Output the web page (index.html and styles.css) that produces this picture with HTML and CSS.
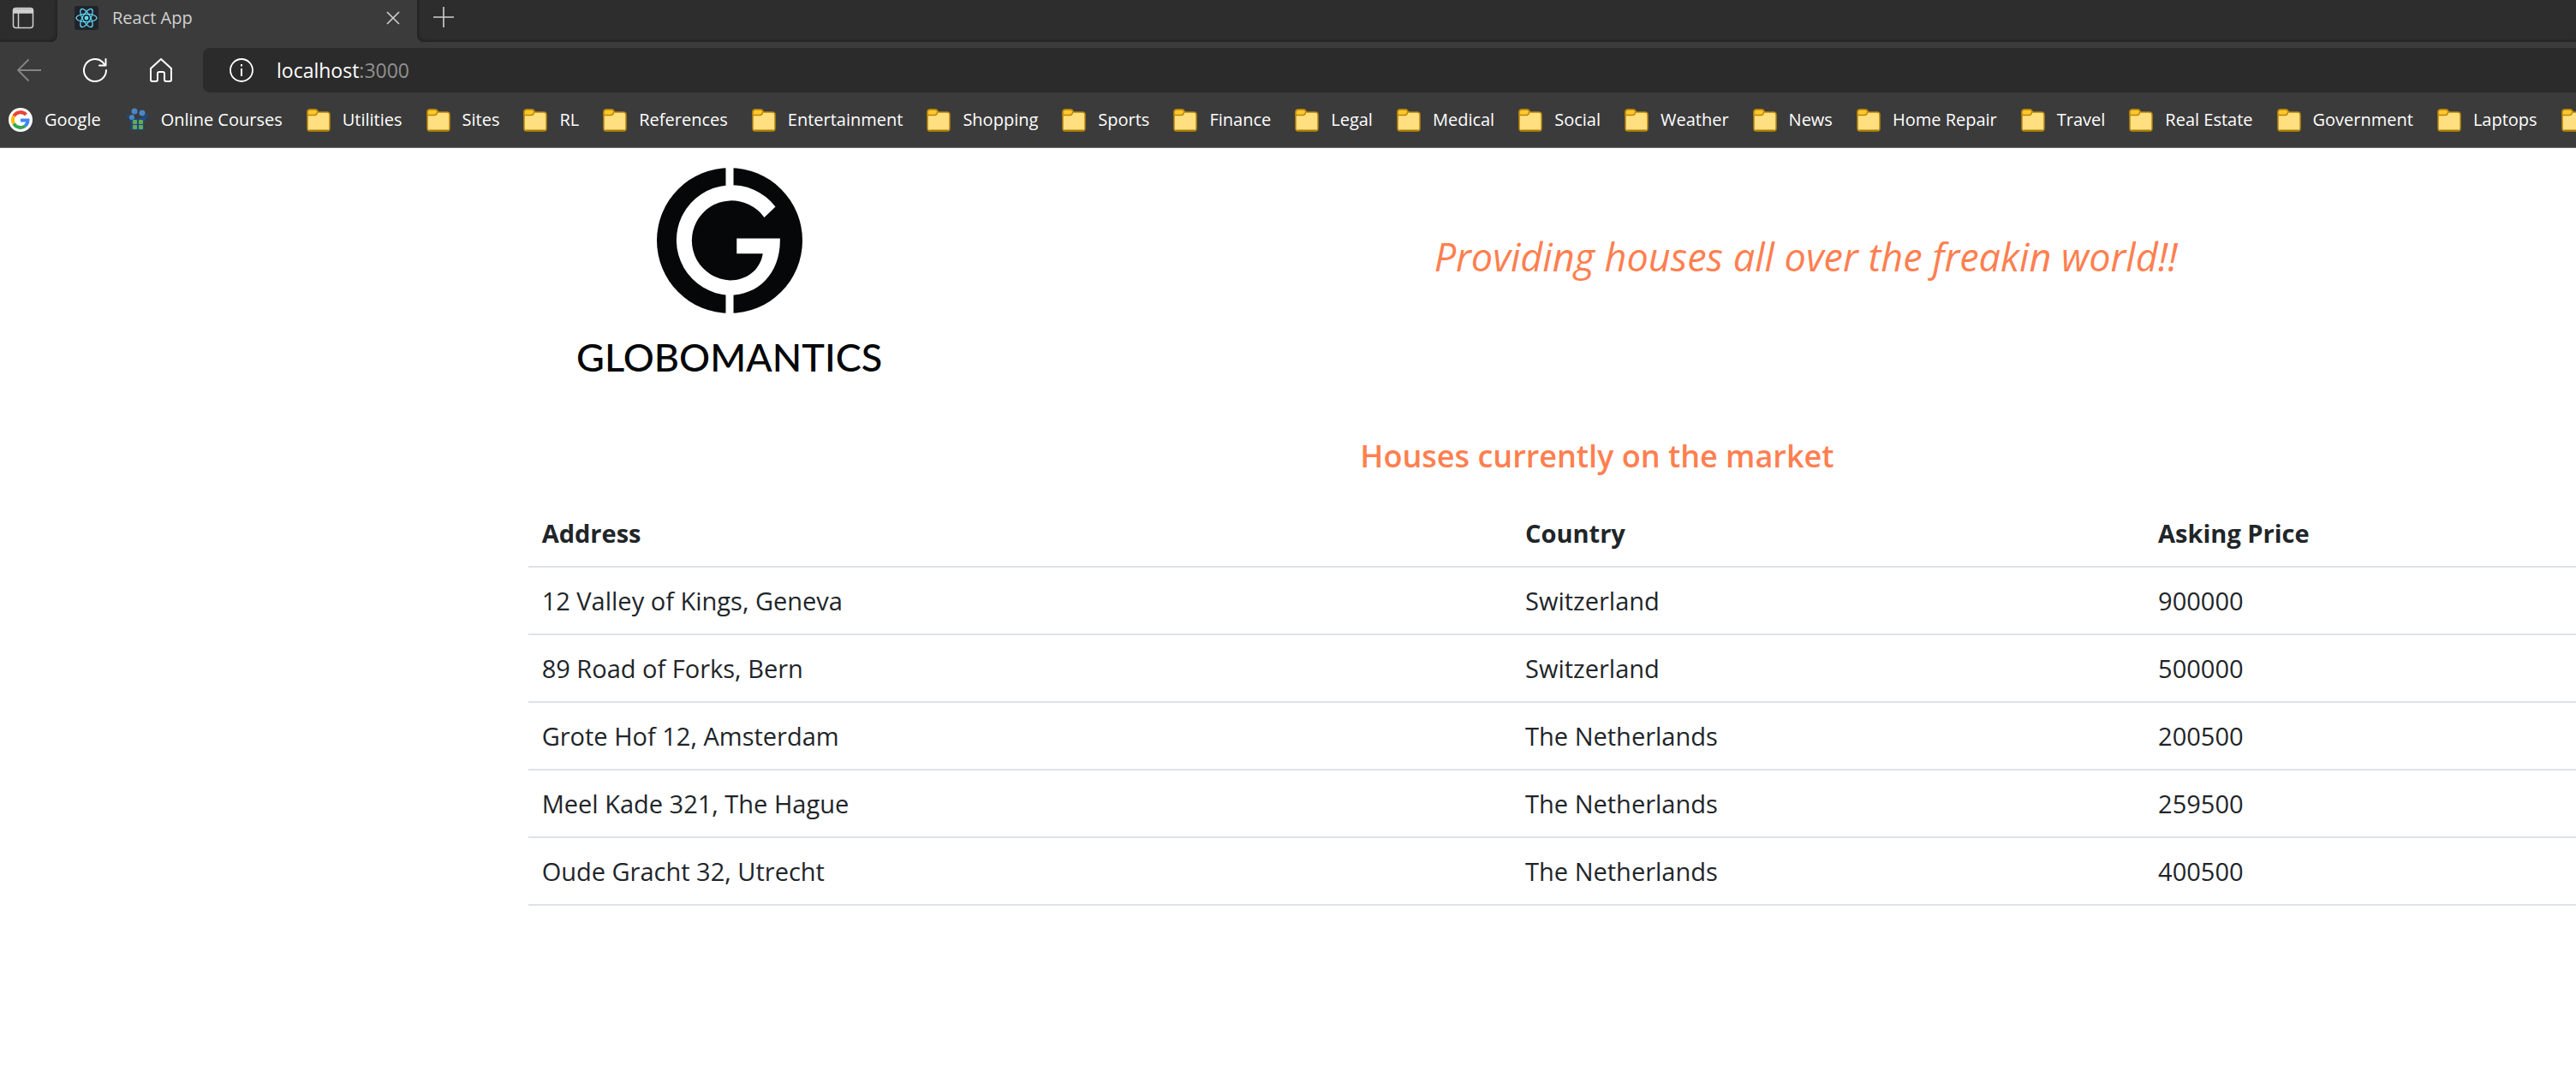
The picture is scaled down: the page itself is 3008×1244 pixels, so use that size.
FILE: index.html
```html
<!DOCTYPE html>
<html lang="en">
<head>
<meta charset="utf-8">
<title>React App</title>
<link rel="stylesheet" href="styles.css">
</head>
<body>
<svg class="sprite" aria-hidden="true">
  <symbol id="folder" viewBox="0 0 28 28">
    <path d="M1 5Q1 2 4 2H10Q12 2 13 4L14 5H24Q27 5 27 8V24Q27 27 24 27H4Q1 27 1 24Z" fill="#ffdf80" stroke="#b8860b" stroke-width="1.5"/>
    <path d="M1 5Q1 2 4 2H10Q12 2 13 4L12 7Q11 8.500 9 8.500H1Z" fill="#ffc72c" stroke="#b8860b" stroke-width="1.500"/>
    <path d="M3 26.500H25" stroke="#a67c00" stroke-width="2"/>
  </symbol>
</svg>
<header class="browser">
  <div class="tabs">
    <button class="icon-btn tab-actions" aria-label="Tab actions">
      <svg width="26" height="26" viewBox="0 0 26 26" fill="none" stroke="#d0d0d0" stroke-width="1.500"><rect x="1.500" y="1.500" width="23" height="23" rx="3"/><path d="M2 3H24V7H2Z" fill="#d0d0d0"/><path d="M7.500 7V24"/></svg>
    </button>
    <div class="tab">
      <svg width="28" height="28" viewBox="0 0 28 28" fill="none" stroke="#61dafb" stroke-width="1.200"><rect width="28" height="28" rx="3" fill="#20232a" stroke="none"/><ellipse cx="14" cy="14" rx="12" ry="4.600"/><ellipse cx="14" cy="14" rx="12" ry="4.600" transform="rotate(60 14 14)"/><ellipse cx="14" cy="14" rx="12" ry="4.600" transform="rotate(120 14 14)"/><circle cx="14" cy="14" r="1.800" fill="#61dafb"/></svg>
      <span class="tab-title">React App</span>
      <button class="icon-btn" aria-label="Close tab"><svg width="16" height="16" viewBox="0 0 16 16" stroke="#d0d0d0" stroke-width="1.600"><path d="M1 1L15 15M15 1L1 15"/></svg></button>
    </div>
    <button class="icon-btn new-tab" aria-label="New tab"><svg width="24" height="24" viewBox="0 0 24 24" stroke="#d0d0d0" stroke-width="1.600"><path d="M12 0V24M0 12H24"/></svg></button>
  </div>
  <div class="toolbar">
    <nav class="controls">
      <button class="icon-btn" aria-label="Back"><svg width="28" height="28" viewBox="0 0 28 28" fill="none" stroke="#858585" stroke-width="1.900"><path d="M13.500 1.500L1 14L13.500 26.500M1 14H28"/></svg></button>
      <button class="icon-btn" aria-label="Refresh"><svg width="28" height="28" viewBox="0 0 28 28" fill="none" stroke="#fff" stroke-width="2" stroke-linecap="round" stroke-linejoin="round"><path d="M27 14A13 13 0 1 1 22.500 4.200L25.500 8M26.500 1V8.500H19"/></svg></button>
      <button class="icon-btn" aria-label="Home"><svg width="28" height="28" viewBox="0 0 28 28" fill="none" stroke="#fff" stroke-width="2" stroke-linejoin="round"><path d="M2 12L14 1L26 12V25Q26 27 24 27H20Q18 27 18 25V18Q18 16 16 16H12Q10 16 10 18V25Q10 27 8 27H4Q2 27 2 25Z"/></svg></button>
    </nav>
    <div class="address">
      <svg width="28" height="28" viewBox="0 0 28 28" fill="none" stroke="#fff" stroke-width="1.800"><circle cx="14" cy="14" r="13"/><path d="M14 12V21M14 7V9.500" stroke-width="2"/></svg>
      <span class="url">localhost<span class="port">:3000</span></span>
    </div>
  </div>
  <nav class="bookmarks">
    <a href="#"><svg viewBox="0 0 28 28" fill="none" stroke-width="4"><circle cx="14" cy="14" r="14" fill="#fff"/><path d="M20.500 8A9 9 0 0 0 6.200 9.500" stroke="#ea4335"/><path d="M6.200 9.500A9 9 0 0 0 6.200 18.500" stroke="#fbbc05"/><path d="M6.200 18.500A9 9 0 0 0 19.500 21" stroke="#34a853"/><path d="M19.500 21A9 9 0 0 0 22.500 14.500H14" stroke="#4285f4"/></svg>Google</a>
    <a href="#"><svg viewBox="0 0 28 28"><path d="M0 6L4 12L7 17V26H22V17L25 12L28 6L20 11L14 13L7 11Z" fill="#1b4c85"/><g fill="#4a86c8"><circle cx="11" cy="4" r="3.500"/><circle cx="20" cy="6" r="3.500"/><circle cx="8" cy="11" r="3"/></g><g fill="#69a84c"><rect x="9" y="14" width="5" height="5" rx="1"/><rect x="16" y="14" width="5" height="5" rx="1"/><rect x="9" y="20" width="5" height="5" rx="1"/><rect x="16" y="20" width="5" height="5" rx="1"/></g></svg>Online Courses</a>
    <a href="#"><svg><use href="#folder"/></svg>Utilities</a>
    <a href="#"><svg><use href="#folder"/></svg>Sites</a>
    <a href="#"><svg><use href="#folder"/></svg>RL</a>
    <a href="#"><svg><use href="#folder"/></svg>References</a>
    <a href="#"><svg><use href="#folder"/></svg>Entertainment</a>
    <a href="#"><svg><use href="#folder"/></svg>Shopping</a>
    <a href="#"><svg><use href="#folder"/></svg>Sports</a>
    <a href="#"><svg><use href="#folder"/></svg>Finance</a>
    <a href="#"><svg><use href="#folder"/></svg>Legal</a>
    <a href="#"><svg><use href="#folder"/></svg>Medical</a>
    <a href="#"><svg><use href="#folder"/></svg>Social</a>
    <a href="#"><svg><use href="#folder"/></svg>Weather</a>
    <a href="#"><svg><use href="#folder"/></svg>News</a>
    <a href="#"><svg><use href="#folder"/></svg>Home Repair</a>
    <a href="#"><svg><use href="#folder"/></svg>Travel</a>
    <a href="#"><svg><use href="#folder"/></svg>Real Estate</a>
    <a href="#"><svg><use href="#folder"/></svg>Government</a>
    <a href="#"><svg><use href="#folder"/></svg>Laptops</a>
    <a href="#" aria-label="More bookmarks"><svg><use href="#folder"/></svg></a>
  </nav>
</header>
<main class="container">
  <div class="banner">
    <div class="logo">
      <svg width="170" height="170" viewBox="0 0 169 169"><circle cx="84.500" cy="84.500" r="84.500" fill="#050708"/><path d="M137.700 45.300A64 64 0 1 0 84 148C118 148 144 122 143 82H92.700V99.700H123C120 119 104 130.700 85 130.700A46.300 46.300 0 1 1 124.700 57.700Z" fill="#fff"/><path d="M80 0H89V22H80ZM80 147H89V169H80Z" fill="#fff"/></svg>
      <span class="wordmark">GLOBOMANTICS</span>
    </div>
    <p class="tagline">Providing houses all over the freakin world!!</p>
  </div>
  <h1 class="heading">Houses currently on the market</h1>
  <table class="houses">
    <thead><tr><th class="col-address">Address</th><th class="col-country">Country</th><th class="col-price">Asking Price</th></tr></thead>
    <tbody>
      <tr><td>12 Valley of Kings, Geneva</td><td>Switzerland</td><td>900000</td></tr>
      <tr><td>89 Road of Forks, Bern</td><td>Switzerland</td><td>500000</td></tr>
      <tr><td>Grote Hof 12, Amsterdam</td><td>The Netherlands</td><td>200500</td></tr>
      <tr><td>Meel Kade 321, The Hague</td><td>The Netherlands</td><td>259500</td></tr>
      <tr><td>Oude Gracht 32, Utrecht</td><td>The Netherlands</td><td>400500</td></tr>
    </tbody>
  </table>
</main>
</body>
</html>
```
FILE: styles.css
```css
* { box-sizing: border-box; }
body {
  margin: 0;
  overflow-x: hidden;
  background: #fff;
  color: #212529;
  font-family: "Open Sans", "Noto Sans", sans-serif;
}
.sprite { position: absolute; width: 0; height: 0; }
svg { display: block; flex: none; }

.browser {
  background: #3b3b3b;
  border-bottom: 1px solid #707070;
  overflow: hidden;
  color: #fff;
}
.icon-btn {
  display: flex;
  padding: 0;
  border: 0;
  background: none;
}
.tabs { display: flex; height: 49px; background: #3b3b3b; }
.tab-actions {
  width: 67px;
  padding: 8px 14px;
  background: #2d2d2d;
  border-bottom-right-radius: 8px;
  box-shadow: inset -2px -2px 3px #242424;
}
.tab {
  display: flex;
  align-items: center;
  width: 420px;
  padding: 0 20px 7px;
  gap: 16px;
}
.tab-title { flex: 1; color: #d0d0d0; font-size: 20px; line-height: 28px; }
.new-tab {
  flex: 1;
  padding: 8px 19px;
  background: #2d2d2d;
  border-bottom-left-radius: 8px;
  box-shadow: inset 2px -2px 3px #242424;
}
.toolbar { display: flex; padding-top: 7px; }
.controls {
  display: flex;
  align-items: center;
  width: 237px;
  padding-left: 20px;
  gap: 49px;
}
.address {
  display: flex;
  flex: 1;
  align-items: center;
  height: 52px;
  padding-left: 31px;
  gap: 27px;
  background: #2b2b2b;
  border-radius: 8px 0 0 8px;
}
.url { font-size: 23px; line-height: 32px; }
.port { color: #909090; }
.bookmarks {
  display: flex;
  align-items: center;
  height: 64px;
  padding-left: 10px;
  gap: 28px;
}
.bookmarks a {
  display: flex;
  flex: none;
  align-items: center;
  gap: 14px;
  color: #fff;
  font-size: 20px;
  line-height: 28px;
  text-decoration: none;
}
.bookmarks svg { width: 28px; height: 28px; }

.container {
  width: 83%;
  margin-left: 20.5%;
}
.banner { display: flex; height: 328px; }
.logo {
  display: flex;
  flex-direction: column;
  align-items: center;
  width: 470px;
  padding-top: 23px;
  gap: 23px;
}
.wordmark {
  color: #050708;
  font-family: Lato, sans-serif;
  font-size: 45px;
  font-weight: 500;
  line-height: 56px;
}
.tagline {
  margin: 93px 0 0 588px;
  color: coral;
  font-size: 45px;
  font-style: italic;
  line-height: 68px;
  white-space: nowrap;
}
.heading {
  margin: 0 0 19px;
  color: coral;
  font-size: 36px;
  font-weight: 600;
  line-height: 64px;
  text-align: center;
}
.houses {
  width: 100%;
  border-collapse: collapse;
  table-layout: fixed;
  font-size: 29px;
  line-height: 46px;
  text-align: left;
}
.houses th, .houses td {
  padding: 16px 16px 15px;
  border-bottom: 2px solid #dee2e6;
}
.col-address { width: 46%; }
.col-country { width: 29.6%; }
.col-price { width: 24.4%; }
```
